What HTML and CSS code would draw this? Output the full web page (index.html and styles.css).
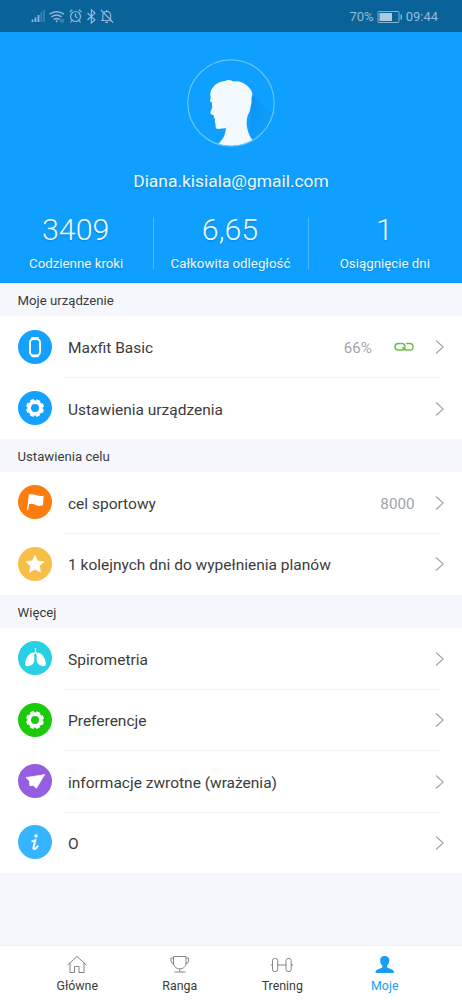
FILE: index.html
```html
<!DOCTYPE html>
<html lang="pl">
<head>
<meta charset="utf-8">
<title>Moje</title>
<link rel="stylesheet" href="styles.css">
</head>
<body>
<svg class="defs" width="0" height="0">
  <symbol id="chevron" viewBox="0 0 10 16"><path d="M1 1.500 8.200 8 1 14.500" fill="none" stroke="#a3a3a3" stroke-width="1.1"/></symbol>
  <symbol id="gear" viewBox="0 0 34 34"><g fill="none" stroke="#fff"><circle cx="17" cy="17" r="5.900" stroke-width="3.800"/><circle cx="17" cy="17" r="8.100" stroke-width="1.800" stroke-dasharray="3.780 2.582" stroke-dashoffset="-1.291"/></g></symbol>
</svg>
<div class="status">
  <svg class="status-left" width="86" height="20" viewBox="0 0 86 20" fill="none" stroke="#8db8d6" stroke-width="1.200">
    <path stroke-width="1.800" d="M2.500 16v-2.500M5.500 16v-4.500M8.500 16V9"/>
    <path stroke-width="1.600" opacity=".4" d="M11.300 16V6M14 16V4"/>
    <path stroke-width="1.500" d="M19.500 8.200q7-5 14.500 0M21.500 10.900q5-3.600 10 0M23.700 13.500q3-2 6 0"/>
    <circle cx="26.700" cy="15.200" r="1" fill="#8db8d6" stroke="none"/><path d="M31 13v3.500M33 13v3.500" stroke-width=".7"/>
    <circle cx="45.500" cy="10.500" r="5"/><path d="M45.500 7.500v3.200l2 1.200M39.500 6l2.800-2.200M51.500 6l-2.800-2.200M41.800 14.500l-1.300 2M49.200 14.500l1.300 2"/>
    <path d="M57.500 7l7.500 7-3.600 3V3.800L65 7l-7.500 7"/>
    <path d="M71 14.500h10.500M72.800 14V9.200a3.900 3.900 0 0 1 7.800 0V14M76.700 5.200V3.700M75.200 16.300h3M71 4l12 12.500"/>
  </svg>
  <div class="status-right">
    <span>70%</span>
    <svg width="26" height="14" viewBox="0 0 26 14"><rect x="1" y="1.500" width="21" height="11" rx="1" fill="none" stroke="#83b2d2"/><path fill="#a9cbe1" d="M2.500 3h12.500v8H2.500z"/><path fill="#83b2d2" d="M23.500 4.500H25v5h-1.500z"/></svg>
    <span class="clock">09:44</span>
  </div>
</div>
<header class="profile">
  <svg class="avatar" width="90" height="90" viewBox="0 0 90 90">
    <defs>
      <clipPath id="disc"><circle cx="45" cy="45" r="43"/></clipPath>
      <linearGradient id="shade" x1="0" y1="0" x2="1" y2="1"><stop offset="0" stop-color="#087fda" stop-opacity=".4"/><stop offset="1" stop-color="#0d98f5" stop-opacity=".1"/></linearGradient>
    </defs>
    <g clip-path="url(#disc)">
      <path fill="url(#shade)" d="M66 36 90 60v30H63z"/>
      <path fill="#f2faff" d="M24.300 36.500C24.500 33 25 31.500 27 29.500c3-5 8.500-6 12-6.500 3-1.700 6-1 8.500.6 3-.6 6-.3 8.500 1 4 1.500 7 4.500 9.300 8 .2 1.500 1.400 2.500 1 4.400-.4 1.500-.9 2.500-.8 4.500.1 3-.3 5-1 7.500-.3 3.500-1.300 6-2.800 8.500-1 3-1.200 6-1 9.500.4 3 1 6 2.300 9 1 3 3 5 4 7V90H29c2-3 3.500-4 5-6 2.500-2.500 4.500-6 5.300-9.500l.7-4.300c-3 0-6.500 1-9 .6-2-.8-1.300-3-1.400-4.500-.8-1.500-.6-2.300-.7-3.800-.2-1 .3-2-.9-2.700-.7-.8.300-1.500-.2-2.400-1.200-.7-3-1-3.400-2.200-.3-1.800 1.500-4 2-6.200-.8-1.700-.2-3.200-.5-4.500-.8-.6-1.800-.8-2-1.500.2-1.200.8-2.200.8-3.500z"/>
      <path d="M40 70q5-2 8-6" fill="none" stroke="#d9efff" stroke-width=".8"/>
    </g>
    <circle cx="45" cy="45" r="43.200" fill="none" stroke="#63c6ff" stroke-width="1.200"/>
  </svg>
  <div class="email">Diana.kisiala@gmail.com</div>
  <div class="stats">
    <div class="stat"><b>3409</b><span>Codzienne kroki</span></div>
    <div class="stat"><b>6,65</b><span>Całkowita odległość</span></div>
    <div class="stat"><b>1</b><span>Osiągnięcie dni</span></div>
  </div>
</header>
<h2 class="section">Moje urządzenie</h2>
<div class="group">
  <div class="row">
    <svg class="icon blue" viewBox="0 0 34 34"><path d="M13.500 7h7l.5 2.300h-8zM13.500 27.200h7l.5-2.300h-8z" fill="#fff"/><rect x="12" y="9" width="10" height="16.500" rx="3.500" fill="none" stroke="#fff" stroke-width="2"/></svg>
    <div class="body"><span class="label">Maxfit Basic</span><span class="value battery">66%</span>
      <svg class="link" width="20" height="10" viewBox="0 0 20 10" fill="none" stroke="#6cc04a" stroke-width="1.500"><path d="M8 8H4.200Q1 8 1 4.800T4.200 1.500h3.600Q11 1.500 11 4.800T8 8M12 1.500h3.800Q19 1.500 19 4.800T15.800 8h-3.600Q9 8 9 4.800"/></svg>
      <svg class="chev"><use href="#chevron"/></svg></div>
  </div>
  <div class="row">
    <svg class="icon blue" viewBox="0 0 34 34"><use href="#gear"/></svg>
    <div class="body"><span class="label">Ustawienia urządzenia</span><svg class="chev"><use href="#chevron"/></svg></div>
  </div>
</div>
<h2 class="section">Ustawienia celu</h2>
<div class="group">
  <div class="row">
    <svg class="icon orange" viewBox="0 0 34 34"><path d="M10.800 9.500q4-1 7.500.7 3.500 1.300 7.300.5L25 20.300q-4 1.300-7.300-.3-3.500-1.800-6.700-.8L10.200 25l-1.200-.2z" fill="#fff"/></svg>
    <div class="body"><span class="label">cel sportowy</span><span class="value">8000</span><svg class="chev"><use href="#chevron"/></svg></div>
  </div>
  <div class="row">
    <svg class="icon yellow" viewBox="0 0 34 34"><path d="M17 8.200l2.700 5.700 6.300.8-4.600 4.300 1.200 6.200-5.600-3-5.600 3 1.200-6.200L8 14.700l6.300-.8z" fill="#fff" stroke="#fff" stroke-width=".6" stroke-linejoin="round"/></svg>
    <div class="body"><span class="label">1 kolejnych dni do wypełnienia planów</span><svg class="chev"><use href="#chevron"/></svg></div>
  </div>
</div>
<h2 class="section">Więcej</h2>
<div class="group">
  <div class="row">
    <svg class="icon cyan" viewBox="0 0 34 34"><path d="M14.700 11.500c1.200 0 1.600 1 1.600 3v5c0 3-2 4.700-5.500 5.500-3.300.6-4-.5-3.600-3.500.8-4.500 4-9.500 7.500-10zM20.300 11.500c-1.200 0-1.600 1-1.600 3v5c0 3 2 4.700 5.500 5.500 3.300.6 4-.5 3.600-3.500-.8-4.500-4-9.500-7.500-10z" fill="#fff"/><path d="M17.500 7v4.500M15.500 13.300l2-2 2 2" fill="none" stroke="#fff" stroke-width="1.300"/></svg>
    <div class="body"><span class="label">Spirometria</span><svg class="chev"><use href="#chevron"/></svg></div>
  </div>
  <div class="row">
    <svg class="icon green" viewBox="0 0 34 34"><use href="#gear"/></svg>
    <div class="body"><span class="label">Preferencje</span><svg class="chev"><use href="#chevron"/></svg></div>
  </div>
  <div class="row">
    <svg class="icon purple" viewBox="0 0 34 34"><path d="M26.500 10.700 8 13.500l3.800 4zM26.500 10.700 11.500 17.500l.3 4.300 3.200-.5 3.500 3z" fill="#fff" stroke="#fff" stroke-width=".7" stroke-linejoin="round"/></svg>
    <div class="body"><span class="label">informacje zwrotne (wrażenia)</span><svg class="chev"><use href="#chevron"/></svg></div>
  </div>
  <div class="row">
    <svg class="icon sky" viewBox="0 0 34 34"><circle cx="18" cy="11" r="1.700" fill="#fff"/><path d="M14.300 16.300q1.700-.2 3.200-1.300l-1.900 6.800q-.6 2.600 1 2.200 1.700-.6 3-2.800" fill="none" stroke="#fff" stroke-width="2" stroke-linecap="round" stroke-linejoin="round"/></svg>
    <div class="body"><span class="label">O</span><svg class="chev"><use href="#chevron"/></svg></div>
  </div>
</div>
<nav class="tabs">
  <div class="tab"><svg viewBox="0 0 24 20"><path d="M2.500 10 12 1.500 21.500 10M5 8v9.500h4.500v-6h4.500v6H19V8"/></svg><span>Główne</span></div>
  <div class="tab"><svg viewBox="0 0 24 20"><path d="M5.500 1.500H18v6.500c0 3.500-2.500 5.800-6.200 5.800S5.500 11.500 5.500 8zM5.500 3H3v3q0 2.500 3 2.700M18 3h2.500v3q0 2.500-3 2.700M11.700 14v2.700M6.500 17h11"/></svg><span>Ranga</span></div>
  <div class="tab"><svg viewBox="0 0 24 20"><rect x="2.500" y="3.500" width="5.200" height="13" rx="2"/><rect x="16" y="3.500" width="5.200" height="13" rx="2"/><path d="M7.700 10H16M.7 10h1.800M21.200 10h1.800"/></svg><span>Trening</span></div>
  <div class="tab active"><svg viewBox="0 0 24 20"><path d="M11.700 1c3 0 4.700 2 4.600 4.600-.1 2.500-1 4-2.300 5.200-.2 1.500.6 2 2.500 2.700 2.900.9 4.500 1.800 4.500 4.500H2.500c0-2.700 1.600-3.600 4.500-4.500 1.900-.7 2.600-1.200 2.400-2.700-1.300-1.200-2.200-2.700-2.300-5.200C7 3 8.700 1 11.700 1z"/></svg><span>Moje</span></div>
</nav>
</body>
</html>
```
FILE: styles.css
```css
* { box-sizing: border-box; }
body {
  margin: 0;
  width: 462px;
  height: 1000px;
  overflow: hidden;
  display: flex;
  flex-direction: column;
  background: #f5f7fc;
  color: #3b3b3b;
  font-family: Roboto, "Noto Sans", sans-serif;
}
.defs { position: absolute; }
.status {
  flex: none;
  height: 32px;
  background: #096399;
  padding: 0 24px 0 30px;
  display: flex;
  align-items: center;
  justify-content: space-between;
  color: #93bdd9;
  font-size: 13px;
}
.status-right { display: flex; align-items: center; gap: 3px; padding-top: 1px; }
.profile {
  flex: none;
  height: 251px;
  background: #0fa0ff;
  color: #edf9ff;
  display: flex;
  flex-direction: column;
  align-items: center;
  padding-top: 26px;
}
.avatar { flex: none; }
.email {
  margin-top: 22px;
  line-height: 22px;
  font-size: 17.4px;
  text-shadow: 0 1px 2px rgba(0, 70, 140, .35);
}
.stats { display: flex; width: 462px; margin-top: 25px; }
.stat {
  flex: 1;
  height: 52px;
  display: flex;
  flex-direction: column;
  align-items: center;
  text-shadow: 0 1px 2px rgba(0, 70, 140, .35);
}
.stat + .stat { border-left: 1px solid #4db8ff; }
.stat b { font-size: 30.4px; font-weight: 300; line-height: 26px; margin-right: 2px; }
.stat span { font-size: 13.3px; line-height: 18px; margin-top: 12px; margin-right: 1px; white-space: nowrap; }
.section {
  flex: none;
  margin: 0;
  height: 33px;
  line-height: 35px;
  padding-left: 17.5px;
  font-size: 13.2px;
  font-weight: 400;
  background: #f5f7fc;
}
.group { flex: none; background: #fff; }
.row { display: flex; align-items: center; height: 61.4px; padding-left: 18px; }
.icon { width: 34px; height: 34px; border-radius: 50%; margin-right: 12px; flex: none; }
.blue { background: #14a1ff; }
.orange { background: #fa7d0e; }
.yellow { background: #f8bf48; }
.cyan { background: #29cfe3; }
.green { background: #1bcb0b; }
.purple { background: #955de0; }
.sky { background: #35b4ff; }
.body {
  flex: 1;
  height: 100%;
  display: flex;
  align-items: center;
  margin-right: 22px;
  padding: 1px 0 0 4px;
  box-shadow: 0 1px #f3f3f3;
}
.row:last-child .body { box-shadow: none; }
.label { flex: 1; font-size: 15.5px; padding-top: 2px; white-space: nowrap; }
.value { font-size: 15.2px; color: #a0a5ad; margin-right: 20.5px; padding-top: 2px; }
.battery { margin-right: 22px; }
.link { margin-right: 21px; }
.chev { width: 10px; height: 16px; margin-right: -5px; flex: none; }
.tabs {
  flex: none;
  margin-top: auto;
  height: 55px;
  background: #fff;
  border-top: 1px solid #eef0f2;
  display: flex;
  padding: 0 26px;
}
.tab {
  flex: 1;
  display: flex;
  flex-direction: column;
  align-items: center;
  padding-top: 9px;
  font-size: 12.4px;
}
.tab svg { width: 24px; height: 20px; fill: none; stroke: #777; stroke-width: .9; }
.tab span { line-height: 16px; margin-top: 3px; }
.tab.active { color: #1a9dfa; }
.tab.active svg { fill: #1a9dfa; stroke: none; }
```
